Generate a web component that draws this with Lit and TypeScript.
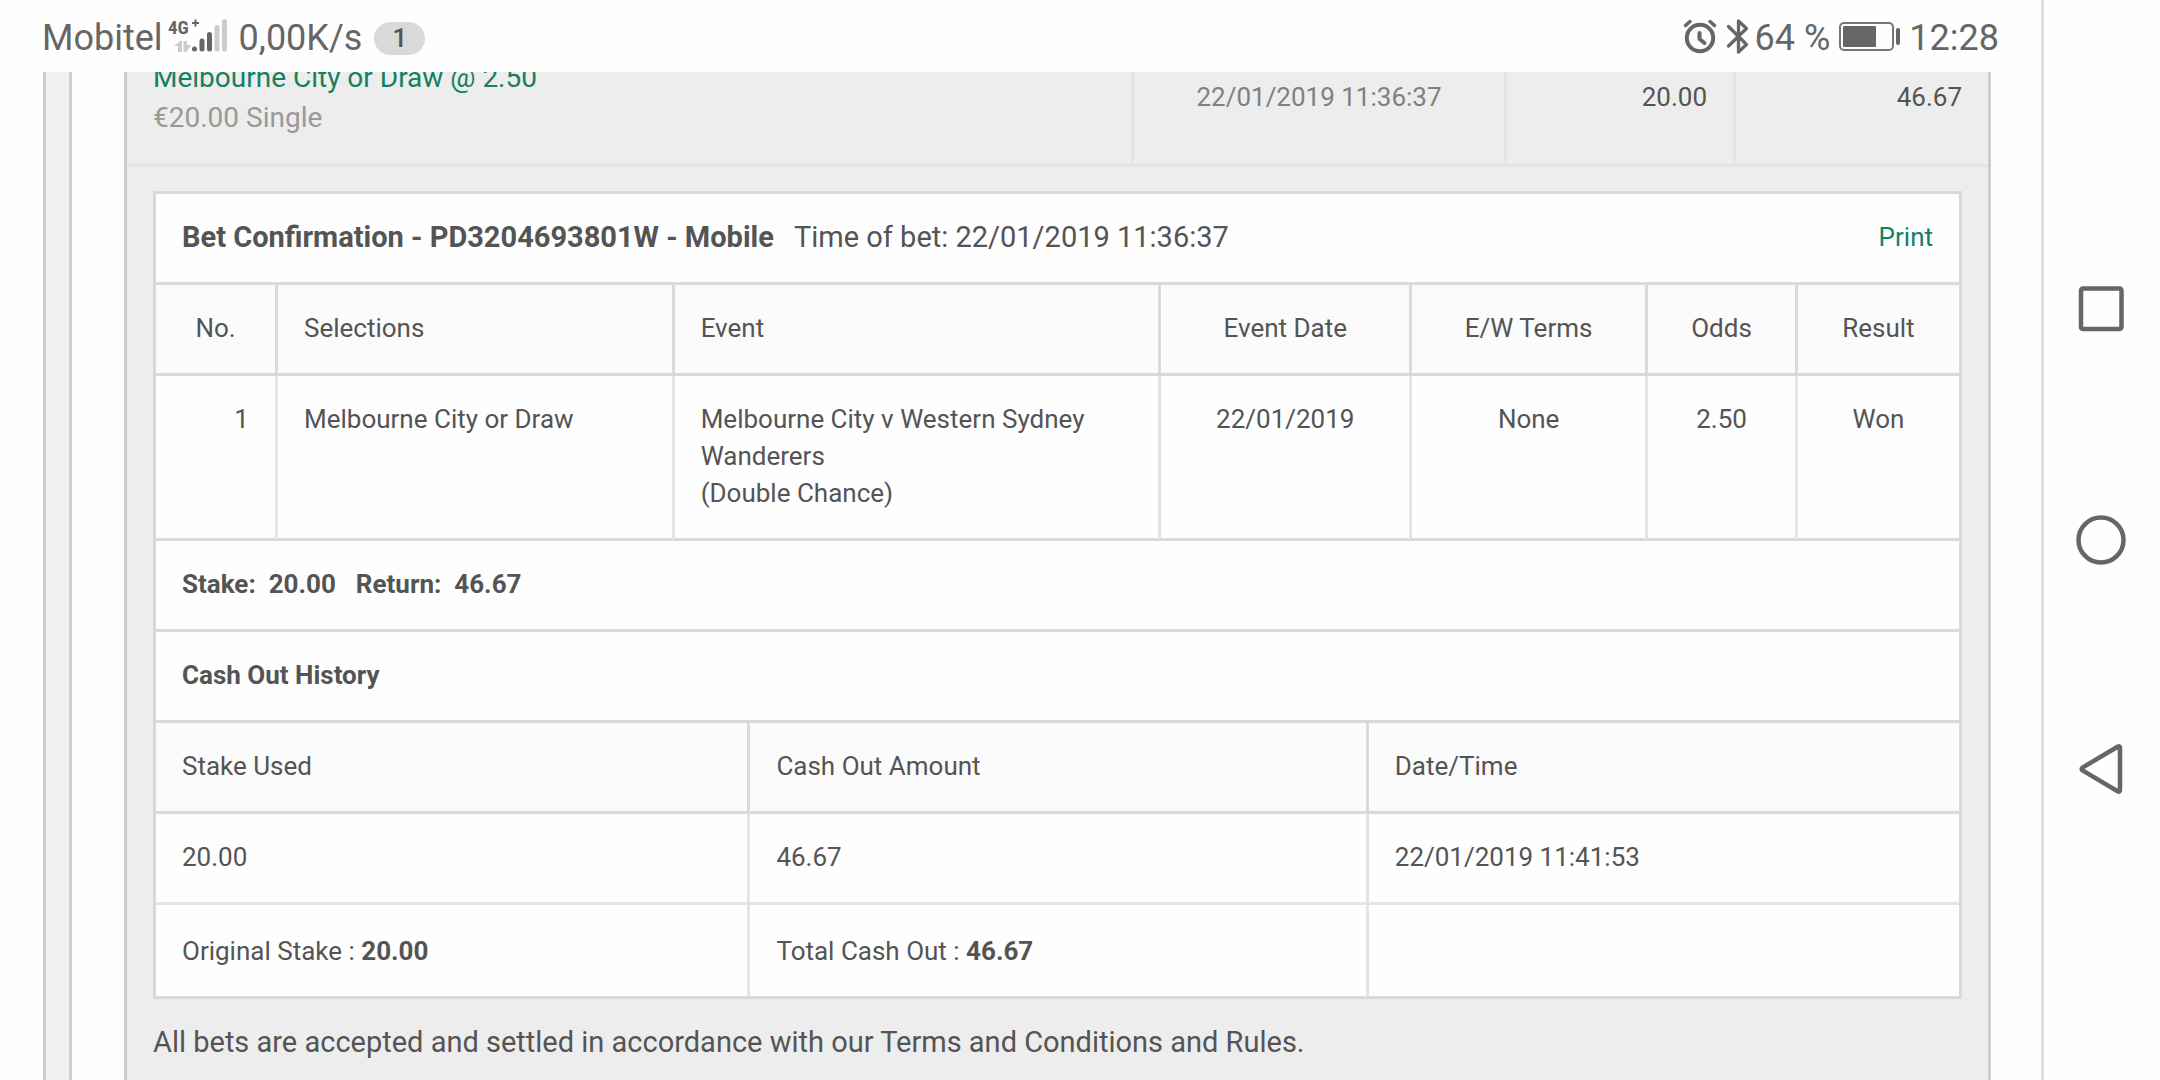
import { LitElement, html, css } from "lit";
import { customElement } from "lit/decorators.js";

interface Leg {
  no: number;
  selection: string;
  event: string;
  market: string;
  date: string;
  terms: string;
  odds: string;
  result: string;
}

const legs: Leg[] = [
  {
    no: 1,
    selection: "Melbourne City or Draw",
    event: "Melbourne City v Western Sydney Wanderers",
    market: "(Double Chance)",
    date: "22/01/2019",
    terms: "None",
    odds: "2.50",
    result: "Won",
  },
];

const cashOuts = [{ stake: "20.00", amount: "46.67", time: "22/01/2019 11:41:53" }];

@customElement("status-bar")
class StatusBar extends LitElement {
  static styles = css`
    :host {
      display: flex;
      flex: none;
      align-items: center;
      justify-content: space-between;
      height: 72px;
      padding: 4px 42px 0 42px;
      box-sizing: border-box;
      font-size: 36px;
      line-height: 42px;
      color: #666;
      white-space: nowrap;
    }
    .group {
      display: flex;
      align-items: center;
    }
    .signal {
      margin: 0 11px 0 5px;
    }
    .count {
      margin-left: 12px;
      width: 51px;
      border-radius: 17px;
      background: #d9d9d9;
      color: #555;
      font-size: 26px;
      line-height: 33px;
      font-weight: 500;
      text-align: center;
    }
    .bluetooth {
      margin: 0 5px 0 8px;
    }
    .battery {
      margin: 0 8px 0 9px;
    }
    svg {
      display: block;
      overflow: visible;
    }
    .tech {
      font-family: "Roboto Condensed", Roboto, sans-serif;
      font-weight: 700;
      font-size: 19px;
    }
  `;

  render() {
    return html`
      <div class="group">
        <span>Mobitel</span>
        <svg class="signal" width="60" height="38" viewBox="0 0 60 38" role="img" aria-label="4G+ signal">
          <text class="tech" x="0" y="15" fill="#666">4G</text>
          <path d="M24 4h7M27.500 .500v7" stroke="#666" stroke-width="2" />
          <path d="M6 27l6-5h2v11h-4v-6zM15.500 22h3.500v4h4l-4.500 7h-3z" fill="#ccc" />
          <g stroke-width="5" stroke-linecap="round">
            <path d="M26.500 30v.1M34 22v8M41.500 15.500V30" stroke="#666" />
            <path d="M49 8.500V30M56.500 2.500V30" stroke="#ccc" />
          </g>
        </svg>
        <span>0,00K/s</span>
        <span class="count">1</span>
      </div>
      <div class="group">
        <svg width="34" height="38" viewBox="0 0 34 38" fill="none" stroke="#666" stroke-width="4" stroke-linecap="round" role="img" aria-label="Alarm">
          <circle cx="16" cy="19" r="13.200" />
          <path d="M15.500 14v6l5 4" stroke-linejoin="round" />
          <path d="M1.500 6.500l4.500-4M30.500 6.500l-4.500-4" stroke-width="3.500" />
        </svg>
        <svg class="bluetooth" width="24" height="38" viewBox="0 0 24 38" fill="none" stroke="#666" stroke-width="3.300" role="img" aria-label="Bluetooth">
          <path d="M2.500 7.500L20.500 25.500 12.500 33V2L20.500 9.500 2.500 27" stroke-linejoin="round" stroke-linecap="round" />
        </svg>
        <span>64 %</span>
        <svg class="battery" width="62" height="34" viewBox="0 0 62 34" role="img" aria-label="Battery">
          <rect x="1" y="2" width="53" height="27" rx="4" fill="none" stroke="#777" stroke-width="2" />
          <rect x="4" y="5" width="33" height="21" rx="1" fill="#666" />
          <rect x="57" y="7" width="4" height="17" rx="2" fill="#666" />
        </svg>
        <span>12:28</span>
      </div>
    `;
  }
}

@customElement("nav-rail")
class NavRail extends LitElement {
  static styles = css`
    :host {
      display: flex;
      flex: none;
      flex-direction: column;
      align-items: center;
      justify-content: center;
      gap: 173px;
      width: 114px;
      padding-right: 2px;
      border-left: 3px solid #dedede;
    }
    button {
      padding: 0;
      border: 0;
      background: none;
      width: 56px;
      height: 56px;
    }
    svg {
      display: block;
      fill: none;
      stroke: #666;
      stroke-width: 4.5;
      stroke-linejoin: round;
    }
  `;

  render() {
    return html`
      <button aria-label="Recent apps">
        <svg width="56" height="56" viewBox="0 0 56 56"><rect x="8" y="5.500" width="40.500" height="40.500" rx="2" /></svg>
      </button>
      <button aria-label="Home">
        <svg width="56" height="56" viewBox="0 0 56 56"><circle cx="28" cy="28" r="22.500" /></svg>
      </button>
      <button aria-label="Back">
        <svg width="56" height="56" viewBox="0 0 56 56"><path d="M9.500 26.600L45 5.500q2-.8 2 1.500v42q0 2.300-2 1.500L9.500 29.400q-1.800-1.400 0-2.800z" /></svg>
      </button>
    `;
  }
}

@customElement("app-root")
class AppRoot extends LitElement {
  static styles = css`
    :host {
      display: flex;
      height: 100vh;
      overflow: hidden;
      background: #fefefe;
      color: #545454;
      font-family: Roboto, "Liberation Sans", sans-serif;
      font-size: 26px;
      line-height: 37px;
    }
    .screen {
      display: flex;
      flex: 1;
      min-width: 0;
      flex-direction: column;
    }
    .page {
      display: flex;
      flex: 1;
      min-height: 0;
      overflow: hidden;
      padding: 0 50px 0 43px;
    }
    .gutter {
      flex: none;
      width: 23px;
      margin-right: 52px;
      border: solid #cdcdcd;
      border-width: 0 3px;
      background: #f0f0f0;
    }
    .panel {
      flex: 1;
      min-width: 0;
      border: solid #cdcdcd;
      border-width: 0 3px;
      background: #ededed;
    }
    .summary {
      display: grid;
      grid-template-columns: 1004fr 373fr 229fr 255fr;
      grid-template-rows: minmax(0, 1fr);
      height: 92px;
      border-bottom: 3px solid #e4e4e4;
    }
    .summary > div {
      padding: 7px 26px 0;
      text-align: right;
      border-left: 3px solid #e4e4e4;
    }
    .summary .bet {
      display: flex;
      flex-direction: column;
      justify-content: flex-end;
      border-left: 0;
      padding: 0 26px;
      padding-bottom: 26px;
      font-size: 28px;
      line-height: 40px;
      text-align: left;
      color: #999;
    }
    .summary .placed {
      text-align: center;
      color: #808080;
    }
    a {
      color: #148060;
      text-decoration: none;
    }
    .detail {
      padding: 24px 26px;
    }
    .card {
      border: 3px solid #d9d9d9;
      background: #fefefe;
    }
    .bar {
      display: flex;
      align-items: center;
      height: 86px;
      padding: 0 26px 2px;
      border-bottom: 3px solid #d9d9d9;
    }
    h2,
    h3 {
      margin: 0;
      font-size: 29px;
      font-weight: 700;
    }
    h3 {
      font-size: 26px;
    }
    .time {
      flex: 1;
      margin-left: 20px;
      font-size: 29px;
    }
    .totals {
      gap: 20px;
      font-weight: 700;
    }
    .totals span {
      white-space: pre;
    }
    table {
      width: 100%;
      table-layout: fixed;
      border-collapse: separate;
      border-spacing: 0;
    }
    th,
    td {
      padding: 25px 26px 26px;
      border-left: 3px solid #e4e4e4;
      border-bottom: 3px solid #d9d9d9;
      font-weight: 400;
      text-align: left;
      vertical-align: top;
    }
    th {
      border-left-color: #d9d9d9;
      background: #fbfbfb;
    }
    th:first-child,
    td:first-child {
      border-left: 0;
    }
    .mid {
      text-align: center;
    }
    .num {
      text-align: right;
    }
    .history td {
      border-bottom-color: #e4e4e4;
    }
    .history tfoot td {
      padding-top: 28px;
      border-bottom: 0;
    }
    .c-no { width: 6.6%; }
    .c-selection { width: 22%; }
    .c-event { width: 27%; }
    .c-date { width: 13.9%; }
    .c-terms { width: 13.1%; }
    .c-odds { width: 8.3%; }
    .c-stake { width: 32.8%; }
    .c-amount { width: 34.3%; }
    .terms {
      margin: 0;
      padding-top: 23px;
      font-size: 29px;
      line-height: 40px;
    }
  `;

  render() {
    return html`
      <div class="screen">
        <status-bar></status-bar>
        <main class="page">
          <div class="gutter"></div>
          <section class="panel">
            <div class="summary">
              <div class="bet">
                <a href="#bet">Melbourne City or Draw @ 2.50</a>
                <span>€20.00 Single</span>
              </div>
              <div class="placed">22/01/2019 11:36:37</div>
              <div>20.00</div>
              <div>46.67</div>
            </div>
            <div class="detail">
              <article class="card">
                <header class="bar">
                  <h2>Bet Confirmation - PD3204693801W - Mobile</h2>
                  <span class="time">Time of bet: 22/01/2019 11:36:37</span>
                  <a href="#print">Print</a>
                </header>
                <table>
                  <colgroup>
                    <col class="c-no" /><col class="c-selection" /><col class="c-event" /><col class="c-date" />
                    <col class="c-terms" /><col class="c-odds" /><col />
                  </colgroup>
                  <thead>
                    <tr>
                      <th class="mid">No.</th>
                      <th>Selections</th>
                      <th>Event</th>
                      <th class="mid">Event Date</th>
                      <th class="mid">E/W Terms</th>
                      <th class="mid">Odds</th>
                      <th class="mid">Result</th>
                    </tr>
                  </thead>
                  <tbody>
                    ${legs.map(
                      (leg) => html`<tr>
                        <td class="num">${leg.no}</td>
                        <td>${leg.selection}</td>
                        <td>${leg.event}<br />${leg.market}</td>
                        <td class="mid">${leg.date}</td>
                        <td class="mid">${leg.terms}</td>
                        <td class="mid">${leg.odds}</td>
                        <td class="mid">${leg.result}</td>
                      </tr>`
                    )}
                  </tbody>
                </table>
                <div class="bar totals">
                  <span>Stake:  20.00</span>
                  <span>Return:  46.67</span>
                </div>
                <div class="bar"><h3>Cash Out History</h3></div>
                <table class="history">
                  <colgroup>
                    <col class="c-stake" /><col class="c-amount" /><col />
                  </colgroup>
                  <thead>
                    <tr>
                      <th>Stake Used</th>
                      <th>Cash Out Amount</th>
                      <th>Date/Time</th>
                    </tr>
                  </thead>
                  <tbody>
                    ${cashOuts.map(
                      (row) => html`<tr>
                        <td>${row.stake}</td>
                        <td>${row.amount}</td>
                        <td>${row.time}</td>
                      </tr>`
                    )}
                  </tbody>
                  <tfoot>
                    <tr>
                      <td>Original Stake : <b>20.00</b></td>
                      <td>Total Cash Out : <b>46.67</b></td>
                      <td></td>
                    </tr>
                  </tfoot>
                </table>
              </article>
              <p class="terms">
                All bets are accepted and settled in accordance with our Terms and Conditions and Rules.
              </p>
            </div>
          </section>
        </main>
      </div>
      <nav-rail></nav-rail>
    `;
  }
}
